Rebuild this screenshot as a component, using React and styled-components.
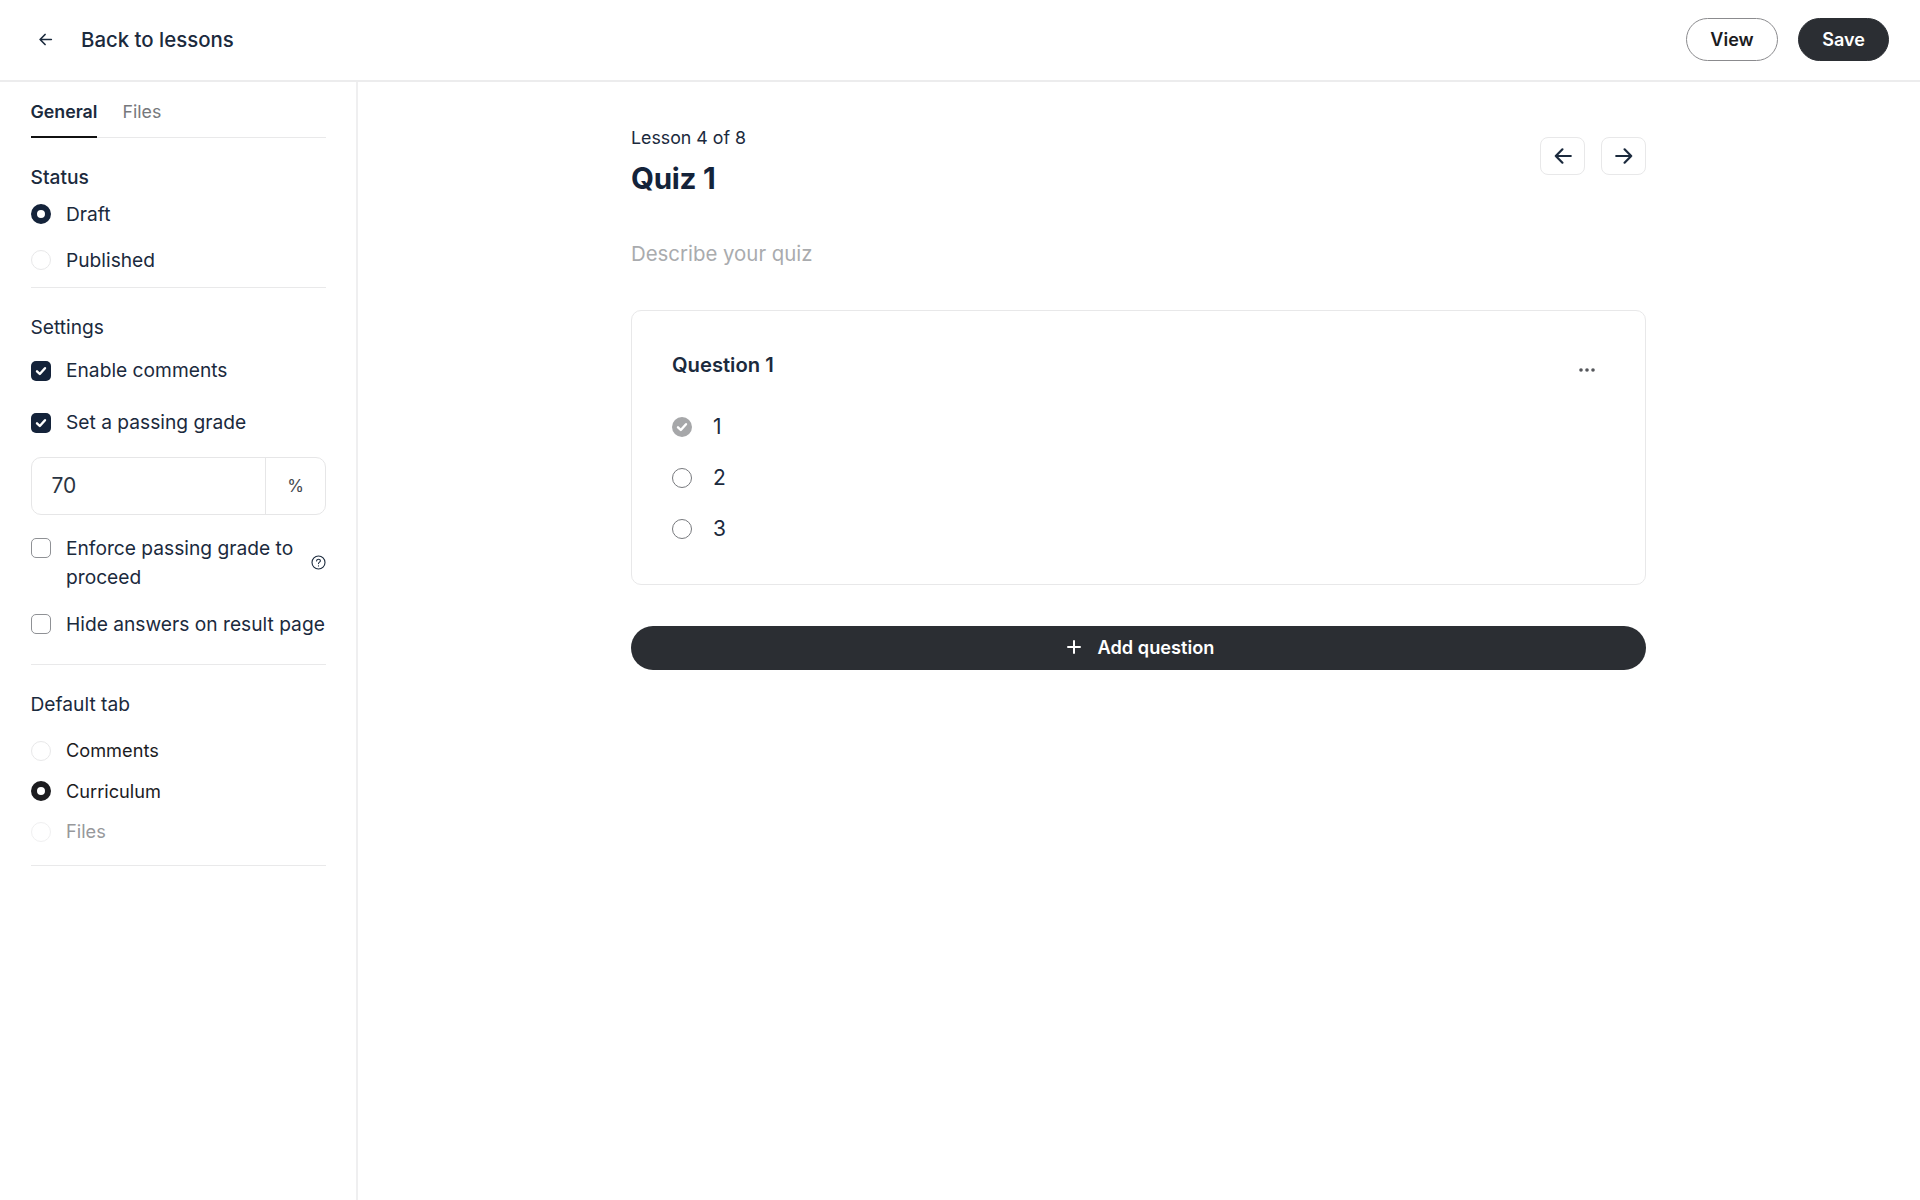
import React from "react";
import styled, { createGlobalStyle } from "styled-components";

const Global = createGlobalStyle`
  html, body { margin: 0; padding: 0; background: #fff; }
  body { font-family: Inter, "Liberation Sans", sans-serif; color: #14233a; }
  * { box-sizing: border-box; }
`;

const Page = styled.div`
  width: 1920px;
  height: 1200px;
  display: flex;
  flex-direction: column;
  overflow: hidden;
`;

const Header = styled.header`
  height: 82px;
  flex: none;
  display: flex;
  align-items: center;
  justify-content: space-between;
  padding: 0 31px 1px 38px;
  border-bottom: 2px solid #ececed;
`;

const BackLink = styled.div`
  display: flex;
  align-items: center;
  gap: 28px;
  font-size: 20.4px;
  font-weight: 500;
  color: #1b2a3d;
`;

const HeaderActions = styled.div`
  display: flex;
  gap: 20px;
`;

const PillButton = styled.button`
  height: 43px;
  width: ${(p) => p.$width}px;
  border-radius: 22px;
  font: 600 18px Inter, sans-serif;
  border: 1px solid ${(p) => (p.$dark ? "#2b2e33" : "#8b8b8e")};
  background: ${(p) => (p.$dark ? "#2b2e33" : "#fff")};
  color: ${(p) => (p.$dark ? "#fff" : "#1c1c1f")};
`;

const Body = styled.div`
  flex: 1;
  display: flex;
  min-height: 0;
`;

const Sidebar = styled.aside`
  width: 358px;
  flex: none;
  padding: 0 30px 0 30.5px;
  border-right: 2px solid #efeff0;
`;

const Tabs = styled.div`
  display: flex;
  gap: 25px;
  height: 56px;
  border-bottom: 1.5px solid #e9e9ea;
`;

const Tab = styled.div`
  height: 56px;
  padding-top: 19px;
  font-size: 17.8px;
  line-height: 22px;
  font-weight: ${(p) => (p.$active ? 600 : 400)};
  color: ${(p) => (p.$active ? "#1b2a3d" : "#76787c")};
  border-bottom: ${(p) => (p.$active ? "2.5px solid #111" : "none")};
`;

const Section = styled.section`
  padding-top: ${(p) => p.$top}px;
  padding-bottom: ${(p) => p.$bottom}px;
  border-bottom: 1.5px solid #e9e9ea;
`;

const SectionTitle = styled.div`
  font-size: 19.2px;
  line-height: 24px;
  font-weight: ${(p) => (p.$strong ? 500 : 400)};
  color: #1b2a3d;
  margin-bottom: ${(p) => p.$gap}px;
`;

const Option = styled.label`
  display: flex;
  align-items: ${(p) => (p.$top ? "flex-start" : "center")};
  gap: 15.5px;
  height: ${(p) => p.$h}px;
  font-size: ${(p) => p.$size || 19.2}px;
  line-height: 29px;
  color: ${(p) => p.$color || "#1b2a3d"};
`;

const RadioMark = styled.span`
  width: 20px;
  height: 20px;
  flex: none;
  border-radius: 50%;
  background: #fff;
  border: ${(p) => (p.$on ? `6px solid ${p.$on}` : `1.5px solid ${p.$line || "#e8e8e9"}`)};
`;

const CheckMark = styled.span`
  width: 20px;
  height: 20px;
  flex: none;
  display: flex;
  align-items: center;
  justify-content: center;
  border-radius: 5px;
  background: ${(p) => (p.$on ? "#14233a" : "#fff")};
  border: ${(p) => (p.$on ? "none" : "1.5px solid #8f9195")};
  margin-top: ${(p) => p.$mt || 0}px;
`;

const GradeField = styled.div`
  height: 58px;
  margin: 8px 0 19.5px;
  display: flex;
  border: 1.5px solid #e6e6e7;
  border-radius: 10px;
`;

const GradeValue = styled.div`
  flex: 1;
  padding-left: 20px;
  font-size: 21px;
  line-height: 56px;
  color: #2a3442;
`;

const GradeUnit = styled.div`
  width: 60px;
  border-left: 1px solid #e6e6e7;
  text-align: center;
  font-size: 17px;
  line-height: 56px;
  color: #45494f;
`;

const EnforceText = styled.span`
  flex: 1;
`;

const HelpIcon = styled.span`
  display: flex;
  align-self: center;
  margin: 0 0 13px -6px;
`;

const Main = styled.main`
  flex: 1;
  padding-top: 42px;
  display: flex;
  justify-content: center;
`;

const Column = styled.div`
  width: 1015px;
  margin-right: 1px;
`;

const LessonHead = styled.div`
  display: flex;
  justify-content: space-between;
`;

const LessonLabel = styled.div`
  font-size: 17.8px;
  line-height: 28px;
  color: #1b2a3d;
`;

const LessonTitle = styled.h1`
  margin: 4px 0 0;
  font-size: 29.6px;
  line-height: 44px;
  font-weight: 700;
  letter-spacing: -0.3px;
  color: #14233a;
`;

const NavGroup = styled.div`
  display: flex;
  gap: 16px;
  padding-top: 13px;
`;

const NavButton = styled.button`
  width: 45px;
  height: 38px;
  display: flex;
  align-items: center;
  justify-content: center;
  padding: 0;
  background: #fff;
  border: 1.5px solid #e8e8e9;
  border-radius: 8px;
`;

const Describe = styled.div`
  margin-top: 40px;
  font-size: 20.4px;
  line-height: 28px;
  color: #a9abae;
`;

const Card = styled.div`
  margin-top: 42px;
  height: 275px;
  padding: 40px 41px 0 40px;
  border: 1.5px solid #e8e8e9;
  border-radius: 10px;
`;

const CardHead = styled.div`
  display: flex;
  justify-content: space-between;
  height: 50px;
`;

const QuestionTitle = styled.div`
  font-size: 20.2px;
  line-height: 28px;
  font-weight: 600;
  color: #1b2a3d;
`;

const MoreDots = styled.span`
  display: flex;
  margin: 16px 9px 0 0;
  height: 8px;
`;

const Answer = styled.div`
  display: flex;
  align-items: center;
  gap: 21px;
  height: 51px;
  font-size: 21px;
  color: #1b2a3d;
`;

const CorrectMark = styled.span`
  width: 20px;
  height: 20px;
  flex: none;
  display: flex;
  align-items: center;
  justify-content: center;
  border-radius: 50%;
  background: #a6a7a9;
`;

const AddButton = styled.button`
  margin-top: 41px;
  width: 100%;
  height: 44px;
  display: flex;
  align-items: center;
  justify-content: center;
  gap: 16px;
  padding: 0 0 2px 3px;
  border: none;
  border-radius: 22px;
  background: #2b2e33;
  color: #fff;
  font: 600 18.2px Inter, sans-serif;
`;

const Check = () => (
  <svg width="14" height="14" viewBox="0 0 14 14" fill="none">
    <path d="M3 7.3L5.8 10L11 4.2" stroke="#fff" strokeWidth="2.4" strokeLinecap="round" strokeLinejoin="round" />
  </svg>
);

const Arrow = ({ dir, size = 20, width = 2 }) => (
  <svg width={size} height={size} viewBox="0 0 18 18" fill="none" stroke="#1b2a3d" strokeWidth={width} strokeLinecap="round" strokeLinejoin="round">
    {dir === "left" ? <path d="M16 9H2.5M8.5 3L2.5 9L8.5 15" /> : <path d="M2 9H15.5M9.5 3L15.5 9L9.5 15" />}
  </svg>
);

export default function App() {
  return (
    <Page>
      <Global />
      <Header>
        <BackLink>
          <Arrow dir="left" size={15} width={2} />
          Back to lessons
        </BackLink>
        <HeaderActions>
          <PillButton $width={92}>View</PillButton>
          <PillButton $width={91} $dark>Save</PillButton>
        </HeaderActions>
      </Header>
      <Body>
        <Sidebar>
          <Tabs>
            <Tab $active>General</Tab>
            <Tab>Files</Tab>
          </Tabs>
          <Section $top={27} $bottom={3.5}>
            <SectionTitle $strong $gap={2}>Status</SectionTitle>
            <Option $h={46}><RadioMark $on="#14233a" />Draft</Option>
            <Option $h={46}><RadioMark />Published</Option>
          </Section>
          <Section $top={27} $bottom={20}>
            <SectionTitle $gap={6}>Settings</SectionTitle>
            <Option $h={52}><CheckMark $on><Check /></CheckMark>Enable comments</Option>
            <Option $h={52}><CheckMark $on><Check /></CheckMark>Set a passing grade</Option>
            <GradeField>
              <GradeValue>70</GradeValue>
              <GradeUnit>%</GradeUnit>
            </GradeField>
            <Option $top $h={70}>
              <CheckMark $mt={4}></CheckMark>
              <EnforceText>Enforce passing grade to proceed</EnforceText>
              <HelpIcon>
                <svg width="15" height="15" viewBox="0 0 15 15" fill="none" stroke="#1b2a3d" strokeWidth="1.1" strokeLinecap="round">
                  <circle cx="7.5" cy="7.5" r="6.5" />
                  <path d="M5.6 5.9C5.7 4.8 6.5 4.2 7.5 4.2C8.6 4.2 9.4 4.9 9.4 5.8C9.4 7.1 7.5 7.1 7.5 8.6" />
                  <path d="M7.5 10.8V10.9" />
                </svg>
              </HelpIcon>
            </Option>
            <Option $h={40}><CheckMark></CheckMark>Hide answers on result page</Option>
          </Section>
          <Section $top={27} $bottom={13}>
            <SectionTitle $gap={14}>Default tab</SectionTitle>
            <Option $h={41} $size={18.2} $color="#1c1c1f"><RadioMark />Comments</Option>
            <Option $h={40} $size={18.2} $color="#1c1c1f"><RadioMark $on="#1c1c1f" />Curriculum</Option>
            <Option $h={41} $size={18.2} $color="#97989b"><RadioMark $line="#f0f0f1" />Files</Option>
          </Section>
        </Sidebar>
        <Main>
          <Column>
            <LessonHead>
              <div>
                <LessonLabel>Lesson 4 of 8</LessonLabel>
                <LessonTitle>Quiz 1</LessonTitle>
              </div>
              <NavGroup>
                <NavButton><Arrow dir="left" /></NavButton>
                <NavButton><Arrow dir="right" /></NavButton>
              </NavGroup>
            </LessonHead>
            <Describe>Describe your quiz</Describe>
            <Card>
              <CardHead>
                <QuestionTitle>Question 1</QuestionTitle>
                <MoreDots>
                  <svg width="16" height="6" viewBox="0 0 16 6" fill="#55575b">
                    <circle cx="2" cy="3" r="1.8" />
                    <circle cx="8" cy="3" r="1.8" />
                    <circle cx="14" cy="3" r="1.8" />
                  </svg>
                </MoreDots>
              </CardHead>
              <Answer><CorrectMark><Check /></CorrectMark>1</Answer>
              <Answer><RadioMark $line="#77797d" />2</Answer>
              <Answer><RadioMark $line="#77797d" />3</Answer>
            </Card>
            <AddButton>
              <svg width="16" height="16" viewBox="0 0 16 16" stroke="#fff" strokeWidth="2" strokeLinecap="round">
                <path d="M8 2V14M2 8H14" />
              </svg>
              Add question
            </AddButton>
          </Column>
        </Main>
      </Body>
    </Page>
  );
}
